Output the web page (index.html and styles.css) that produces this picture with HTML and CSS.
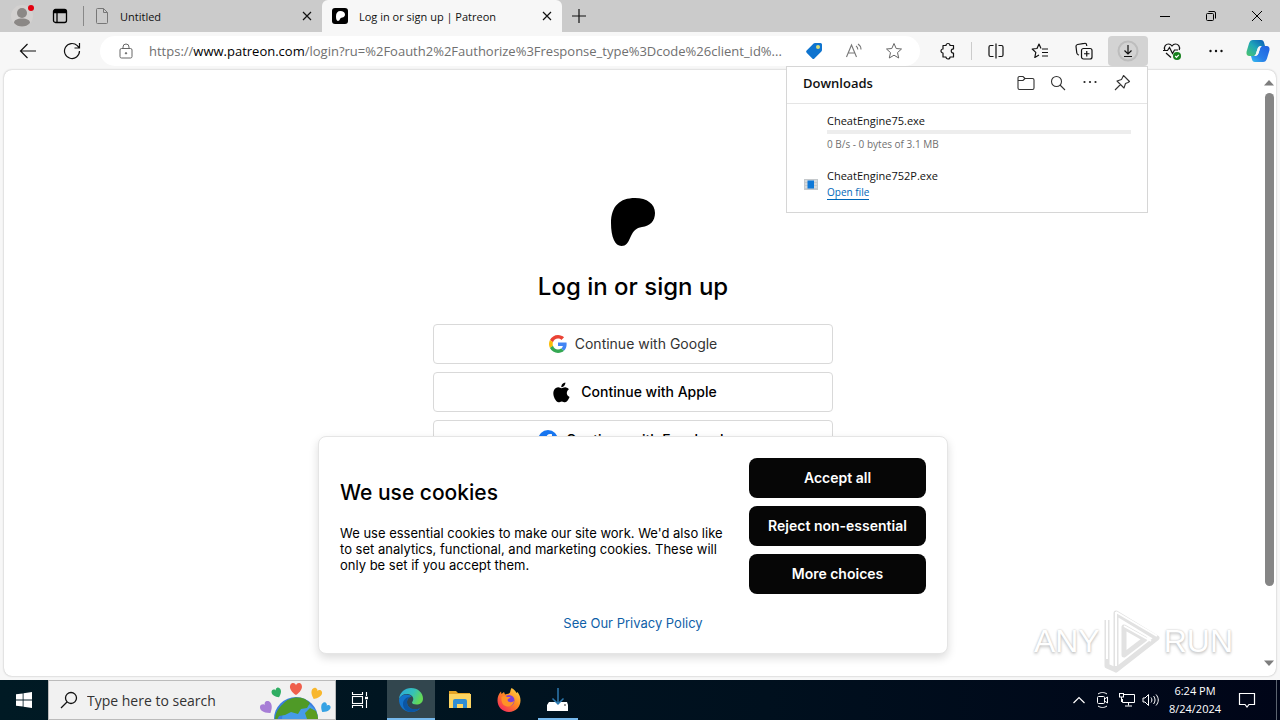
FILE: index.html
```html
<!doctype html>
<html lang="en">
<head>
  <meta charset="UTF-8">
  <meta name="viewport" content="width=device-width, initial-scale=1.0">
  <title>Log in or sign up | Patreon</title>
  <link rel="stylesheet" href="styles.css">
</head>
<body>
  <!-- tab strip -->
  <header class="tabs">
    <button class="profile" aria-label="Profile">
      <svg width="24" height="24" viewBox="0 0 24 24"><circle cx="12" cy="12" r="11" fill="#d3d1d0"/><circle cx="12" cy="9" r="5" fill="#8b8886"/><path d="M4 19c0-3 3-4.500 8-4.500s8 1.500 8 4.500c-2 2.500-5 3.500-8 3.500S6 21.500 4 19z" fill="#8b8886"/><circle cx="21" cy="4" r="3" fill="#e3000f"/></svg>
    </button>
    <button class="workspaces" aria-label="Tab actions">
      <svg width="16" height="16" viewBox="0 0 16 16" fill="none" stroke="#000" stroke-width="1.300"><rect x="1.500" y="1.500" width="13" height="13" rx="2"/><path d="M2 3.500h12" stroke-width="3.500"/><path d="M5 5v9"/></svg>
    </button>
    <div class="tab">
      <svg width="14" height="16" viewBox="0 0 14 16" fill="none" stroke="#777"><path d="M1.500 1.500a1 1 0 0 1 1-1h6l4 4v10a1 1 0 0 1-1 1h-9a1 1 0 0 1-1-1zM8.500.500v4h4"/></svg>
      <span class="tab-title">Untitled</span>
      <button class="tab-close" aria-label="Close tab"><svg width="10" height="10" viewBox="0 0 10 10" stroke="#111" stroke-width="1.200"><path d="M1 1l8 8M9 1L1 9"/></svg></button>
    </div>
    <div class="tab active">
      <svg width="16" height="16" viewBox="0 0 16 16"><rect width="16" height="16" rx="3" fill="#000"/><path d="M8.500 3C11 3 13 4.400 13 6.500c0 1.700-1.200 2.700-2.700 3-1.200.200-1.800.600-2.400 1.800C7.400 12.400 7 13 5.900 13 4.500 13 4 11 4 8.300 4 5 5.500 3 8.500 3z" fill="#fff"/></svg>
      <span class="tab-title">Log in or sign up | Patreon</span>
      <button class="tab-close" aria-label="Close tab"><svg width="10" height="10" viewBox="0 0 10 10" stroke="#111" stroke-width="1.200"><path d="M1 1l8 8M9 1L1 9"/></svg></button>
    </div>
    <button class="new-tab" aria-label="New tab"><svg width="14" height="14" viewBox="0 0 14 14" stroke="#111" stroke-width="1.200"><path d="M7 0v14M0 7h14"/></svg></button>
    <div class="window-buttons">
      <button aria-label="Minimize"><svg width="10" height="10" viewBox="0 0 10 10" stroke="#000"><path d="M0 5.500h10"/></svg></button>
      <button aria-label="Restore"><svg width="10" height="10" viewBox="0 0 10 10" fill="none" stroke="#000"><rect x=".5" y="2.500" width="7" height="7" rx="1"/><path d="M2.500.500H8A1.500 1.500 0 0 1 9.500 2v5.500"/></svg></button>
      <button aria-label="Close"><svg width="10" height="10" viewBox="0 0 10 10" stroke="#000"><path d="M0 0l10 10M10 0L0 10"/></svg></button>
    </div>
  </header>

  <!-- toolbar -->
  <nav class="toolbar">
    <button class="tool" aria-label="Back"><svg width="18" height="16" viewBox="0 0 18 16" fill="none" stroke="#111" stroke-width="1.200"><path d="M17 8H1.500M8.500 1l-7 7 7 7"/></svg></button>
    <button class="tool" aria-label="Refresh"><svg width="18" height="18" viewBox="0 0 18 18" fill="none" stroke="#111" stroke-width="1.200"><path d="M16.500 9a7.500 7.500 0 1 1-2.200-5.300L16 5.500M16.500 1v5h-5"/></svg></button>
    <div class="address">
      <svg width="14" height="16" viewBox="0 0 14 16" fill="none" stroke="#666"><rect x="1" y="5.500" width="12" height="9.500" rx="1.500"/><path d="M4 5.500V4a3 3 0 0 1 6 0v1.500"/><circle cx="7" cy="10.300" r=".7" fill="#666"/></svg>
      <a class="url" href="#">https://<b>www.patreon.com</b>/login?ru=%2Foauth2%2Fauthorize%3Fresponse_type%3Dcode%26client_id%...</a>
      <button class="tool" aria-label="Shopping"><svg width="18" height="18" viewBox="0 0 18 18"><path d="M10 1h5.500A1.500 1.500 0 0 1 17 2.500V8a2 2 0 0 1-.6 1.400l-7 7a1.500 1.500 0 0 1-2.100 0L1.600 10.700a1.500 1.500 0 0 1 0-2.100l7-7A2 2 0 0 1 10 1z" fill="#0f74cf"/><circle cx="13" cy="5" r="2" fill="#d9dd7a"/></svg></button>
      <button class="tool" aria-label="Read aloud"><svg width="18" height="16" viewBox="0 0 18 16" fill="none" stroke="#777" stroke-width="1.100"><path d="M1.500 14L6.500 2l5 12M3.300 10h6.400M11 3c1.200.800 1.800 2 1.800 3.500M13 1c2 1.300 3 3.300 3 5.500"/></svg></button>
      <button class="tool" aria-label="Favorite"><svg width="18" height="18" viewBox="0 0 18 18" fill="none" stroke="#666" stroke-linejoin="round"><path d="M9 1.500l2.200 5 5.300.500-4 3.600 1.200 5.400L9 13.200 4.300 16l1.200-5.400-4-3.600 5.300-.5z"/></svg></button>
    </div>
    <button class="tool" aria-label="Extensions"><svg width="18" height="18" viewBox="0 0 18 18" fill="none" stroke="#111" stroke-width="1.200" stroke-linejoin="round"><path d="M4 3.500h3a2 2 0 0 1 4 0h3.500V7c-3-.5-3 4.500 0 4V15H11a2 2 0 0 1-4 0H4v-4a2 2 0 0 1 0-4z"/></svg></button>
    <span class="tool-divider"></span>
    <button class="tool" aria-label="Split screen"><svg width="18" height="18" viewBox="0 0 18 18" fill="none" stroke="#111" stroke-width="1.200"><path d="M6.500 3.500H3.500a1.500 1.500 0 0 0-1.500 1.500v8a1.500 1.500 0 0 0 1.500 1.500h3M9 1.500v15M11.500 3.500h3A1.500 1.500 0 0 1 16 5v8a1.500 1.500 0 0 1-1.500 1.500h-3"/></svg></button>
    <button class="tool" aria-label="Favorites"><svg width="18" height="18" viewBox="0 0 18 18" fill="none" stroke="#111" stroke-width="1.200" stroke-linejoin="round"><path d="M10 6.500L8 2 6 6.500l-4.800.500 3.600 3.400-1 5.100L8 13M11 7h6M11 10.500h6M11 14h6"/></svg></button>
    <button class="tool" aria-label="Collections"><svg width="18" height="18" viewBox="0 0 18 18" fill="none" stroke="#111" stroke-width="1.200"><rect x="6.500" y="6.500" width="10.500" height="10.500" rx="2"/><path d="M11.750 9v5.500M9 11.750h5.500M4 13l-.8-.3C2.300 12.300 2 12 1.800 11L1 4.500C.9 3.300 1.500 2.700 2.500 2.500L9.500 1.300c1-.2 1.800.2 2 1.200l.3 1.500"/></svg></button>
    <div class="download-menu">
      <button class="tool pressed" aria-label="Downloads"><svg width="22" height="22" viewBox="0 0 22 22" fill="none" stroke="#111" stroke-width="1.200"><circle cx="11" cy="11" r="9.500" stroke="#bdbdbd" stroke-width="2"/><path d="M11 5v9M7.500 10.500L11 14l3.500-3.500M7 16.500h8"/></svg></button>
      <section class="downloads">
        <div class="downloads-head">
          <h2>Downloads</h2>
          <button class="mini" aria-label="Open downloads folder"><svg width="18" height="16" viewBox="0 0 18 16" fill="none" stroke="#333" stroke-width="1.100"><path d="M1 3a1.500 1.500 0 0 1 1.500-1.500h3.500l2 2h7.500A1.500 1.500 0 0 1 17 5v8a1.500 1.500 0 0 1-1.500 1.500h-13A1.500 1.500 0 0 1 1 13zM1 5.500h5l2-2"/></svg></button>
          <button class="mini" aria-label="Search downloads"><svg width="16" height="16" viewBox="0 0 16 16" fill="none" stroke="#333" stroke-width="1.100"><circle cx="6.500" cy="6.500" r="5"/><path d="M10 10l5 5"/></svg></button>
          <button class="mini" aria-label="More options"><svg width="16" height="16" viewBox="0 0 16 16" fill="#222"><circle cx="2.500" cy="7" r="1.100"/><circle cx="8" cy="7" r="1.100"/><circle cx="13.500" cy="7" r="1.100"/></svg></button>
          <button class="mini" aria-label="Pin downloads"><svg width="18" height="18" viewBox="0 0 18 18" fill="none" stroke="#333" stroke-width="1.100" stroke-linejoin="round"><path d="M10.500 1.500l6 6-1.500 1-2.500 1-1.500 4.500L4 7l4.500-1.500zM7.500 10.500L2 16"/></svg></button>
        </div>
        <ul>
          <li>
            <span class="file-icon"></span>
            <div class="file">
              <span class="file-name">CheatEngine75.exe</span>
              <div class="file-progress"></div>
              <span class="file-status">0 B/s - 0 bytes of 3.1 MB</span>
            </div>
          </li>
          <li>
            <svg class="file-icon" width="16" height="14" viewBox="0 0 16 14"><rect x="1" y="2" width="14" height="11" fill="#c5c9cc"/><path d="M2 4h12M2 7h12M2 10h12" stroke="#e9ebec"/><rect x="4.500" y="3.500" width="6.500" height="8" fill="#0f78d7"/></svg>
            <div class="file">
              <span class="file-name">CheatEngine752P.exe</span>
              <a href="#" class="open-file">Open file</a>
            </div>
          </li>
        </ul>
      </section>
    </div>
    <button class="tool" aria-label="Browser essentials"><svg width="18" height="18" viewBox="0 0 18 18" fill="none" stroke="#111" stroke-width="1.200"><path d="M1.800 8C.5 4.500 3 2 5.500 2 7.300 2 8.300 3 9 4c.7-1 1.700-2 3.500-2C15 2 17.500 4.500 16.200 8M0 8.500h4.500L6.500 5.500l3 6 2-3.500H15M3 11l5 4.500"/><circle cx="14" cy="14" r="4" fill="#16801d" stroke="none"/><path d="M12.200 14l1.300 1.300 2.300-2.500" stroke="#fff"/></svg></button>
    <button class="tool" aria-label="Settings and more"><svg width="16" height="16" viewBox="0 0 16 16" fill="#111"><circle cx="2.500" cy="8" r="1.200"/><circle cx="8" cy="8" r="1.200"/><circle cx="13.500" cy="8" r="1.200"/></svg></button>
    <button class="tool copilot" aria-label="Copilot">
      <svg width="24" height="24" viewBox="0 0 24 24">
        <defs>
          <linearGradient id="cpa" x1="0" y1="1" x2="1" y2="0"><stop offset="0" stop-color="#4ec66b"/><stop offset=".5" stop-color="#1fa7b8"/><stop offset="1" stop-color="#0a56b8"/></linearGradient>
          <linearGradient id="cpb" x1="1" y1="0" x2="0" y2="1"><stop offset="0" stop-color="#1f5fe0"/><stop offset=".6" stop-color="#2a7fe8"/><stop offset="1" stop-color="#35c0ee"/></linearGradient>
        </defs>
        <path d="M7 1h8c2 0 2.500 1 3 2.500L19 7h-4c-2 0-3 1-3.600 3l-1.600 5c-.5 1.500-1.500 2-2.800 2H3.500C1 17 0 15 .6 12.500L3 4.500C3.800 2 5 1 7 1z" fill="url(#cpa)"/>
        <path d="M17 23H9c-2 0-2.500-1-3-2.500L5 17h4c2 0 3-1 3.600-3l1.600-5c.5-1.500 1.500-2 2.800-2h3.500c2.500 0 3.500 2 2.900 4.500L21 19.500c-.8 2.500-2 3.500-4 3.500z" fill="url(#cpb)"/>
        <path d="M13.500 7.500c-1 .6-1.600 1.500-2.100 3l-1.500 4.500c-.4 1.200-.9 1.700-1.700 2 1.700 0 3.600-.8 4.400-3l1.600-5c.3-.8.700-1.300 1.300-1.700z" fill="#f7f7f7"/>
      </svg>
    </button>
  </nav>

  <!-- web page -->
  <div class="page">
    <div class="viewport">
      <main class="login">
        <svg class="logo" width="44" height="48" viewBox="0 0 44 48"><path d="M24 0C36 0 44 6 44 15c0 8-5 13-13 14-6 1-8.500 3.500-11.500 10C17 45 15 48 10.500 48 4 48 0 39 0 25 0 8 9 0 24 0z"/></svg>
        <h1>Log in or sign up</h1>
        <button class="social google">
          <svg width="18" height="18" viewBox="0 0 48 48"><path fill="#EA4335" d="M24 9.500c3.540 0 6.710 1.220 9.210 3.600l6.850-6.850C35.900 2.380 30.470 0 24 0 14.620 0 6.510 5.380 2.560 13.220l7.980 6.190C12.430 13.720 17.740 9.500 24 9.500z"/><path fill="#4285F4" d="M46.980 24.550c0-1.570-.15-3.090-.38-4.550H24v9.020h12.940c-.58 2.960-2.260 5.480-4.780 7.180l7.730 6c4.510-4.180 7.090-10.360 7.090-17.650z"/><path fill="#FBBC05" d="M10.530 28.590c-.48-1.450-.76-2.990-.76-4.590s.27-3.140.76-4.590l-7.980-6.190C.92 16.460 0 20.120 0 24c0 3.880.92 7.540 2.560 10.780l7.970-6.190z"/><path fill="#34A853" d="M24 48c6.480 0 11.930-2.130 15.890-5.810l-7.730-6c-2.150 1.450-4.920 2.300-8.160 2.300-6.260 0-11.570-4.220-13.470-9.910l-7.980 6.190C6.510 42.620 14.620 48 24 48z"/></svg>
          <span>Continue with Google</span>
        </button>
        <button class="social apple">
          <svg width="24" height="24" viewBox="0 0 24 24"><path transform="translate(-2 -2) scale(1.200)" d="M16.500 12.600c0-2.100 1.700-3.100 1.800-3.200-1-1.400-2.500-1.600-3-1.700-1.300-.1-2.500.8-3.200.8-.6 0-1.600-.7-2.700-.7-1.400 0-2.700.8-3.400 2-1.500 2.500-.4 6.300 1 8.300.7 1 1.500 2.100 2.600 2.100s1.500-.7 2.700-.7c1.300 0 1.600.7 2.700.7 1.100 0 1.900-1 2.600-2 .8-1.200 1.100-2.300 1.200-2.400-.1 0-2.300-.9-2.300-3.200zM14.400 6.400c.6-.7 1-1.700.9-2.700-.8 0-1.900.6-2.500 1.300-.5.600-1 1.600-.9 2.600 1 .1 1.900-.5 2.500-1.200z"/></svg>
          <span>Continue with Apple</span>
        </button>
        <button class="social facebook">
          <svg width="20" height="20" viewBox="0 0 20 20"><circle cx="10" cy="10" r="10" fill="#1877f2"/><path d="M8.400 20v-7H6v-3h2.400V7.800C8.400 5.400 9.800 4 12 4c1 0 2 .200 2 .200v2.500h-1.200c-1.200 0-1.500.700-1.500 1.500V10H14l-.4 3h-2.300v7z" fill="#fff"/></svg>
          <span>Continue with Facebook</span>
        </button>
      </main>

      <section class="cookies">
        <div class="cookies-text">
          <h2>We use cookies</h2>
          <p>We use essential cookies to make our site work. We'd also like to set analytics, functional, and marketing cookies. These will only be set if you accept them.</p>
        </div>
        <div class="cookies-buttons">
          <button>Accept all</button>
          <button>Reject non-essential</button>
          <button>More choices</button>
        </div>
        <a href="#" class="policy">See Our Privacy Policy</a>
      </section>
    </div>
    <div class="scrollbar">
      <svg width="10" height="6" viewBox="0 0 10 6"><path d="M5 0l5 5.500H0z" fill="#7d7d7d"/></svg>
      <div class="track"><div class="thumb"></div></div>
      <svg width="10" height="6" viewBox="0 0 10 6"><path d="M5 6l5-5.500H0z" fill="#7d7d7d"/></svg>
    </div>
    <div class="watermark">
      <span>ANY</span>
      <svg width="56" height="64" viewBox="0 0 56 64" fill="none" stroke-linejoin="round"><g stroke="#e2e2e2" stroke-width="5"><path d="M12 4l41 25-41 32z"/><path d="M3 11v46l9 4M20 18v28l21-16z"/></g><g stroke="#fff" stroke-width="2"><path d="M12 3l41 24M12 3v54M3 10v40M20 17l27 15"/></g></svg>
      <span>RUN</span>
    </div>
  </div>

  <!-- taskbar -->
  <footer class="taskbar">
    <button class="start" aria-label="Start"><svg width="16" height="16" viewBox="0 0 16 16" fill="#fff"><path d="M0 2.300L6.700 1.400v6.200H0zM7.500 1.300L16 0v7.600H7.500zM0 8.400h6.700v6.200L0 13.700zM7.500 8.400H16V16l-8.500-1.200z"/></svg></button>
    <label class="search">
      <svg width="18" height="18" viewBox="0 0 18 18" fill="none" stroke="#111" stroke-width="1.300"><circle cx="11" cy="7" r="5.500"/><path d="M7 11l-6 6"/></svg>
      <input type="text" placeholder="Type here to search" aria-label="Search">
      <svg class="globe" width="72" height="38" viewBox="0 0 72 38">
        <defs><path id="heart" d="M0 6C-9 0-6-6-3-6c2 0 3 1.500 3 2.500C0-4.500 1-6 3-6c3 0 6 6-3 12z"/></defs>
        <circle cx="37" cy="38" r="22" fill="#3b7fe0"/>
        <circle cx="41" cy="39" r="18" fill="#469be8"/>
        <path d="M24 23c5-6 14-8 22-5l5 4-3 5-6 1-3 5-7-2-6 3-6 1-2 4h-2c0-6 3-12 8-16z" fill="#4f9a27"/>
        <path d="M46 32l5-5 6 3c1 3 2 5 2 8H48z" fill="#5a9c20"/>
        <use href="#heart" transform="translate(37 8)" fill="#ef5f4c"/>
        <use href="#heart" transform="translate(18 12) rotate(-25) scale(.8)" fill="#2fae63"/>
        <use href="#heart" transform="translate(57 13) rotate(25) scale(.9)" fill="#f8b72d"/>
        <use href="#heart" transform="translate(8 27) rotate(-35)" fill="#a77ed6"/>
        <use href="#heart" transform="translate(66 27) rotate(35) scale(.8)" fill="#35a2e4"/>
      </svg>
    </label>
    <button class="task task-view" aria-label="Task view"><svg width="18" height="16" viewBox="0 0 18 16" fill="none" stroke="#fff" stroke-width="1.100"><rect x="1.500" y="4.500" width="10" height="7"/><path d="M1.500 0v2.500h10V0M1.500 16v-2.500h10V16M15.500 0v4M15.500 8v8"/><path d="M14 6h3" stroke-width="2.500"/></svg></button>
    <button class="task running focused" aria-label="Edge">
      <svg width="26" height="26" viewBox="0 0 26 26">
        <defs><linearGradient id="edge" x1="0" y1="0" x2="1" y2=".4"><stop offset="0" stop-color="#2aa7e0"/><stop offset=".6" stop-color="#35c1b8"/><stop offset="1" stop-color="#63d957"/></linearGradient></defs>
        <path d="M1 12C1.500 5.500 7 1 13 1c7 0 12 5 12 10.500 0 4-3 6-6.500 6-3 0-4.500-1-4.500-2 0-.7 1.300-1.400 1.300-3.500C15.300 9 12 7 8.500 7 5 7 2.500 9 1 12z" fill="url(#edge)"/>
        <path d="M1 12c1.500-3 4-4.500 7.500-4.500 2 0 4 .8 5.200 2-3 .5-4.700 3-4.700 5.500 0 5 4.500 8 9 7.500 2-.2 3.500-1 4.300-1.300C20.500 23.500 17 25 13 25 6 25 .6 19 1 12z" fill="#1272c9"/>
        <path d="M9 15c0 6 6 9 13 6-2 2.800-5.500 4-9 4-5 0-8-4-8-8s3-7 8-7.500c-3 .8-4 3-4 5.500z" fill="#0b55a2"/>
      </svg>
    </button>
    <button class="task" aria-label="File Explorer"><svg width="22" height="20" viewBox="0 0 22 20"><path d="M0 1h7l2 2h12v4H0z" fill="#e5a426"/><path d="M0 4h22v14H0z" fill="#fcd462"/><path d="M4 18v-7a2 2 0 0 1 2-2h10a2 2 0 0 1 2 2v7h-4v-4H8v4z" fill="#2f8dd3"/></svg></button>
    <button class="task" aria-label="Firefox">
      <svg width="24" height="24" viewBox="0 0 24 24">
        <defs><linearGradient id="fox" x1="1" y1="0" x2=".2" y2="1"><stop offset="0" stop-color="#ffe14a"/><stop offset=".5" stop-color="#ff8a22"/><stop offset="1" stop-color="#f5275d"/></linearGradient></defs>
        <path d="M14.500 0c2.500 1 4 3 5 5l1-1c2 2.500 3 5.500 3 8.500C23.500 19 18.500 24 12 24S.5 19 .5 12.500c0-3.500 1-6.500 3.500-9l.5 2.500L7 4l1 2.500C11 6 12.500 5.500 13 4.500 13.500 3 13.500 1.500 14.500 0z" fill="url(#fox)"/>
        <circle cx="12" cy="12.500" r="5.500" fill="#7b3fd9"/>
        <path d="M4.500 9c2-1.500 4.500-1 5.500 0h3.500c-.5 1.500-2.500 1.500-3 3 .5 2.500 4 3 6.500 1-1 4.500-4 6-7 5.500-4-.5-6-4-5.500-9.500z" fill="#ff9226"/>
      </svg>
    </button>
    <button class="task running" aria-label="Installer"><svg width="24" height="24" viewBox="0 0 24 24"><path d="M3 14h18l1 3v6H1v-6z" fill="#fff"/><path d="M18 17h2" stroke="#333"/><path d="M12 0v16M6.500 10.500L12 16l5.500-5.500" fill="none" stroke="#2c79b0" stroke-width="1.500"/></svg></button>

    <div class="tray">
      <button aria-label="Show hidden icons"><svg width="12" height="8" viewBox="0 0 12 8" fill="none" stroke="#fff" stroke-width="1.200"><path d="M.5 7L6 1.500 11.500 7"/></svg></button>
      <button aria-label="Meet now"><svg width="14" height="18" viewBox="0 0 14 18" fill="none" stroke="#fff"><rect x="1.500" y="5.500" width="7" height="7" rx="1"/><path d="M8.500 8l3-2v6l-3-2M2 3c3-2 6-2 9 0M2 15c3 2 6 2 9 0"/></svg></button>
      <button aria-label="Network"><svg width="18" height="16" viewBox="0 0 18 16" fill="none" stroke="#fff"><path d="M6 2.500h10.500v8H4.500V7M10.500 10.500v3M7 14h7"/><rect x="1.500" y="1.500" width="4" height="3.500"/><path d="M3.500 5v5"/></svg></button>
      <button aria-label="Volume"><svg width="18" height="14" viewBox="0 0 18 14" fill="none" stroke="#fff"><path d="M1 5v4h2l3.500 3.500v-11L3 5zM9 4.500c1.200 1.500 1.200 3.500 0 5M11.500 3c2 2.500 2 5.500 0 8M14 1.500c3 3.500 3 7.500 0 11"/></svg></button>
      <time class="clock">6:24 PM<br>8/24/2024</time>
      <button class="notifications" aria-label="Notifications"><svg width="18" height="18" viewBox="0 0 18 18" fill="none" stroke="#fff" stroke-width="1.200"><path d="M1.500 2.500h15v11H11L9 16l-2-2.500H1.500z"/></svg></button>
      <span class="show-desktop"></span>
    </div>
  </footer>
</body>
</html>
```

FILE: styles.css
```css
* {
  box-sizing: border-box;
}
body {
  margin: 0;
  height: 100vh;
  display: flex;
  flex-direction: column;
  background: #f7f7f7;
  font-family: "Open Sans", "Noto Sans", sans-serif;
  font-size: 11px;
  color: #111;
  overflow: hidden;
}
button {
  display: flex;
  align-items: center;
  justify-content: center;
  flex-shrink: 0;
  padding: 0;
  border: none;
  background: none;
  font-family: inherit;
  color: inherit;
}
svg {
  display: block;
  flex-shrink: 0;
}

/* tab strip */
.tabs {
  display: flex;
  height: 32px;
  background: #cbcbcb;
}
.profile {
  width: 44px;
}
.workspaces {
  width: 32px;
}
.tab {
  display: flex;
  align-items: center;
  gap: 11px;
  width: 239px;
  padding: 0 10px;
}
.workspaces + .tab {
  margin-left: 7px;
  padding-left: 12px;
  background: linear-gradient(#888, #888) 0 50% / 1px 20px no-repeat;
}
.tab-title {
  flex: 1;
  white-space: nowrap;
}
.tab-close {
  width: 10px;
  height: 16px;
}
.tab.active {
  width: 240px;
  background: #f7f7f7;
  border-radius: 6px 6px 0 0;
}
.new-tab {
  width: 34px;
}
.window-buttons {
  display: flex;
  margin-left: auto;
}
.window-buttons button {
  width: 46px;
}

/* toolbar */
.toolbar {
  display: flex;
  align-items: center;
  gap: 4px;
  height: 38px;
  padding: 0 4px 0 8px;
}
.tool {
  width: 40px;
  height: 30px;
  border-radius: 4px;
}
.tool.pressed {
  background: #d3d3d3;
}
.tool.copilot {
  width: 36px;
}
.tool-divider {
  width: 1px;
  height: 18px;
  margin-left: -1px;
  background: #ccc;
}
.address {
  display: flex;
  align-items: center;
  flex: 1;
  min-width: 0;
  height: 30px;
  margin: 0 4px;
  padding: 0 6px 0 19px;
  border-radius: 15px;
  background: #fff;
}
.url {
  flex: 1;
  min-width: 0;
  margin-left: 16px;
  overflow: hidden;
  white-space: nowrap;
  font-size: 13px;
  color: #707070;
  text-decoration: none;
}
.url b {
  font-weight: normal;
  color: #000;
}

/* downloads popup */
.download-menu {
  position: relative;
}
.downloads {
  position: absolute;
  top: 100%;
  right: 0;
  z-index: 2;
  width: 362px;
  background: #fff;
  border: 1px solid #d6d6d6;
}
.downloads-head {
  display: flex;
  align-items: center;
  height: 37px;
  padding: 0 9px 4px 16px;
  border-bottom: 1px solid #e5e5e5;
}
.downloads-head h2 {
  flex: 1;
  margin: 0;
  font-size: 13px;
  font-weight: 600;
}
.mini {
  width: 32px;
  height: 32px;
}
.downloads ul {
  margin: 0;
  padding: 8px 16px 12px;
  list-style: none;
}
.downloads li {
  display: flex;
  align-items: center;
  gap: 8px;
}
.downloads li + li {
  margin-top: 16px;
}
.file-icon {
  width: 16px;
}
.file {
  flex: 1;
}
.file-name {
  display: block;
  line-height: 17px;
}
.file-progress {
  height: 4px;
  margin: 1px 0 3px;
  background: #ededed;
}
.file-status {
  display: block;
  font-size: 10px;
  line-height: 14px;
  color: #707070;
}
.open-file {
  display: inline-block;
  border-bottom: 1px solid #0067b8;
  font-size: 10px;
  line-height: 14px;
  color: #0067b8;
  text-decoration: none;
}

/* web page */
.page {
  position: relative;
  display: flex;
  flex: 1;
  min-height: 0;
  margin: 0 4px 4px;
  background: #fff;
  border-radius: 8px;
  box-shadow: 0 0 2px #aaa;
  font-family: Inter, sans-serif;
}
.viewport {
  position: relative;
  flex: 1;
  overflow: hidden;
}
.login {
  display: flex;
  flex-direction: column;
  align-items: center;
  width: 400px;
  margin: 0 auto;
  padding-top: 128px;
}
.login h1 {
  margin: 24px 0 20px;
  font-size: 24px;
  font-weight: 500;
  line-height: 34px;
  color: #000;
}
.social {
  gap: 8px;
  width: 100%;
  height: 40px;
  margin-bottom: 8px;
  padding-bottom: 1px;
  border: 1px solid #d9d9d9;
  border-radius: 4px;
  font-size: 14px;
  font-weight: 500;
  color: #000;
}
.social.google {
  font-weight: 400;
  color: #333;
}
.cookies {
  position: absolute;
  left: 0;
  right: 0;
  bottom: 22px;
  display: grid;
  grid-template-columns: 1fr 177px;
  align-items: center;
  column-gap: 16px;
  width: 630px;
  margin: 0 auto;
  padding: 21px 21px 22px;
  background: #fff;
  border: 1px solid #e5e5e5;
  border-radius: 8px;
  box-shadow: 0 4px 10px rgba(0,0,0,0.14);
  color: #000;
}
.cookies h2 {
  margin: 0 0 18px;
  font-size: 21px;
  font-weight: 500;
  line-height: 28px;
}
.cookies p {
  margin: 0;
  font-size: 13px;
  line-height: 16px;
}
.cookies-buttons {
  display: grid;
  gap: 8px;
}
.cookies-buttons button {
  height: 40px;
  padding-bottom: 1px;
  border-radius: 8px;
  background: #060606;
  color: #fff;
  font-size: 14px;
  font-weight: 600;
}
.policy {
  grid-column: 1 / 3;
  margin: 21px auto 0;
  font-size: 13px;
  line-height: 16px;
  color: #0f5fa8;
  text-decoration: none;
}
.scrollbar {
  display: flex;
  flex-direction: column;
  align-items: center;
  width: 14px;
  padding: 10px 0;
}
.track {
  flex: 1;
  margin: 7px 0;
}
.thumb {
  width: 9px;
  height: 88%;
  border-radius: 5px;
  background: #858585;
}
.watermark {
  position: absolute;
  right: 43px;
  bottom: 3px;
  display: flex;
  align-items: center;
  gap: 4px;
  font-family: "Liberation Sans", sans-serif;
  font-size: 32px;
  color: #fff;
  text-shadow: 0 0 2px #bbb, 0 2px 3px #ccc;
}

/* taskbar */
.taskbar {
  display: flex;
  height: 40px;
  background: linear-gradient(90deg, #001a24, #00101e 60%, #000518);
  color: #fff;
}
.start {
  width: 48px;
}
.search {
  display: flex;
  align-items: center;
  width: 288px;
  padding: 0 4px 0 11px;
  background: #f1f1f1;
  border: 1px solid #bbb;
}
.search input {
  flex: 1;
  min-width: 0;
  margin-left: 9px;
  padding: 0;
  border: none;
  background: none;
  font-family: inherit;
  font-size: 14px;
}
.search input::placeholder {
  color: #333;
}
.task {
  width: 48px;
  margin-right: 1px;
}
.task-view {
  margin-right: 3px;
}
.running {
  background: linear-gradient(#76b9ed, #76b9ed) 50% 100% / 40px 2px no-repeat;
}
.running.focused {
  background: linear-gradient(#76b9ed, #76b9ed) 0 100% / 100% 2px no-repeat #32464e;
}
.tray {
  display: flex;
  align-items: center;
  margin-left: auto;
}
.tray button {
  width: 24px;
  height: 40px;
}
.clock {
  width: 64px;
  line-height: 18px;
  text-align: center;
}
.tray .notifications {
  width: 40px;
}
.show-desktop {
  width: 4px;
  height: 40px;
  margin-left: 9px;
  border-left: 1px solid #5c6470;
}
```
